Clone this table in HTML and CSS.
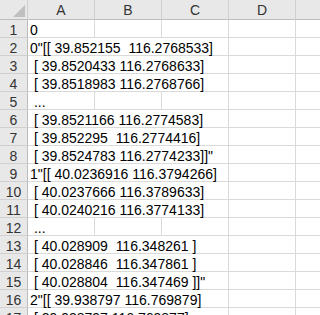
FILE: index.html
```html
<!DOCTYPE html>
<html>
<head>
<meta charset="utf-8">
<link rel="stylesheet" href="styles.css">
</head>
<body>
<div class="sheet">
  <div class="corner"><div class="tri"></div></div>
  <div class="colh">A</div>
  <div class="colh">B</div>
  <div class="colh">C</div>
  <div class="colh">D</div>
  <div class="colh last"></div>

  <div class="rowh">1</div><div class="cell">0</div><div class="cell"></div><div class="cell"></div><div class="cell"></div><div class="cell last"></div>
  <div class="rowh">2</div><div class="cell span">0"[[ 39.852155  116.2768533]</div><div class="cell"></div><div class="cell last"></div>
  <div class="rowh">3</div><div class="cell span"> [ 39.8520433 116.2768633]</div><div class="cell"></div><div class="cell last"></div>
  <div class="rowh">4</div><div class="cell span"> [ 39.8518983 116.2768766]</div><div class="cell"></div><div class="cell last"></div>
  <div class="rowh">5</div><div class="cell"> ...</div><div class="cell"></div><div class="cell"></div><div class="cell"></div><div class="cell last"></div>
  <div class="rowh">6</div><div class="cell span"> [ 39.8521166 116.2774583]</div><div class="cell"></div><div class="cell last"></div>
  <div class="rowh">7</div><div class="cell span"> [ 39.852295  116.2774416]</div><div class="cell"></div><div class="cell last"></div>
  <div class="rowh">8</div><div class="cell span"> [ 39.8524783 116.2774233]]"</div><div class="cell"></div><div class="cell last"></div>
  <div class="rowh">9</div><div class="cell span">1"[[ 40.0236916 116.3794266]</div><div class="cell"></div><div class="cell last"></div>
  <div class="rowh">10</div><div class="cell span"> [ 40.0237666 116.3789633]</div><div class="cell"></div><div class="cell last"></div>
  <div class="rowh">11</div><div class="cell span"> [ 40.0240216 116.3774133]</div><div class="cell"></div><div class="cell last"></div>
  <div class="rowh">12</div><div class="cell"> ...</div><div class="cell"></div><div class="cell"></div><div class="cell"></div><div class="cell last"></div>
  <div class="rowh">13</div><div class="cell span"> [ 40.028909  116.348261 ]</div><div class="cell"></div><div class="cell last"></div>
  <div class="rowh">14</div><div class="cell span"> [ 40.028846  116.347861 ]</div><div class="cell"></div><div class="cell last"></div>
  <div class="rowh">15</div><div class="cell span"> [ 40.028804  116.347469 ]]"</div><div class="cell"></div><div class="cell last"></div>
  <div class="rowh">16</div><div class="cell span">2"[[ 39.938797 116.769879]</div><div class="cell"></div><div class="cell last"></div>
  <div class="rowh">17</div><div class="cell span"> [ 39.938797 116.769877]</div><div class="cell"></div><div class="cell last"></div>
</div>
</body>
</html>
```

FILE: styles.css
```css
html, body {
  margin: 0;
  padding: 0;
  background: #ffffff;
  overflow: hidden;
  width: 320px;
  height: 315px;
}

.sheet {
  display: grid;
  grid-template-columns: 28px 67px 67px 67px 67px 24px;
  grid-template-rows: 20px repeat(17, 18px);
  font-family: "Liberation Sans", Arial, sans-serif;
  font-size: 14px;
  line-height: 20px;
  color: #000;
}

.corner,
.colh,
.rowh {
  background: #e8e8e8;
  color: #333;
  box-sizing: border-box;
  border-right: 1px solid #d0d0d0;
  border-bottom: 1px solid #d0d0d0;
}

.corner {
  display: flex;
  justify-content: flex-end;
  align-items: flex-end;
  padding: 0 2px 2px 0;
  border-bottom-color: #bcbcbc;
}

.tri {
  width: 12px;
  height: 12px;
  background: #bfbfbf;
  clip-path: polygon(100% 0, 100% 100%, 0 100%);
}

.colh {
  text-align: center;
  border-bottom-color: #bcbcbc;
}

.colh.last {
  border-right: none;
}

.rowh {
  text-align: center;
  line-height: 20px;
  overflow: visible;
  border-right-color: #bcbcbc;
}

.cell {
  box-sizing: border-box;
  border-right: 1px solid #dadada;
  border-bottom: 1px solid #dadada;
  white-space: pre;
  padding-left: 2px;
  overflow: visible;
}

.cell.span {
  grid-column: span 3;
}

.cell.last {
  border-right: none;
}
```
